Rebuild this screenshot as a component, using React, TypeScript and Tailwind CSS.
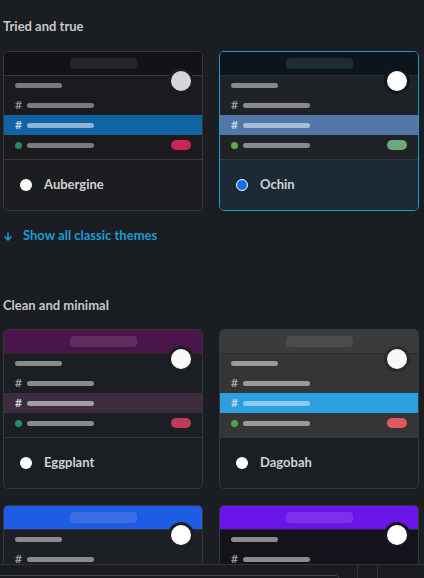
import React from 'react';

type Theme = {
  name: string;
  selected?: boolean;
  border: string;
  header: string;
  pill: string;
  line: string;
  body: string;
  bar: string;
  hash: string;
  active: string;
  activeBar: string;
  dot: string;
  badge: string;
  ring: string;
  knob: string;
  footer: string;
};

const classic: Theme[] = [
  {
    name: 'Aubergine',
    border: 'border-[#36373b]',
    header: 'bg-[#131216]',
    pill: 'bg-[#26252b]',
    line: 'border-[#38373c]',
    body: 'bg-[#1b1a1f]',
    bar: 'bg-[#7a7a7d]',
    hash: 'text-[#8b8b8e]',
    active: 'bg-[#1164a3]',
    activeBar: 'bg-[#8db4d6]',
    dot: 'bg-[#25895f]',
    badge: 'bg-[#cd2553]',
    ring: 'border-[#1c1b20]',
    knob: 'bg-[#d6d6d8]',
    footer: 'bg-[#1b1d21]',
  },
  {
    name: 'Ochin',
    selected: true,
    border: 'border-[#1d9bd1]',
    header: 'bg-[#0c151c]',
    pill: 'bg-[#1f2a32]',
    line: 'border-[#2c3237]',
    body: 'bg-[#1f2227]',
    bar: 'bg-[#8a8a8c]',
    hash: 'text-[#9a9a9c]',
    active: 'bg-[#5077a6]',
    activeBar: 'bg-[#a8bdd6]',
    dot: 'bg-[#5faa46]',
    badge: 'bg-[#6da77d]',
    ring: 'border-[#10171d]',
    knob: 'bg-white',
    footer: 'bg-[#1c2a35]',
  },
];

const minimal: Theme[] = [
  {
    name: 'Eggplant',
    border: 'border-[#36373b]',
    header: 'bg-[#4a154b]',
    pill: 'bg-[#5d2f5e]',
    line: 'border-[#2e2b31]',
    body: 'bg-[#1b1e22]',
    bar: 'bg-[#8a8a8c]',
    hash: 'text-[#9a9a9c]',
    active: 'bg-[#3d2c3d]',
    activeBar: 'bg-[#a39da3]',
    dot: 'bg-[#2a8c62]',
    badge: 'bg-[#c13b59]',
    ring: 'border-[#1b1e22]',
    knob: 'bg-[#fbf9f6]',
    footer: 'bg-[#1b1e22]',
  },
  {
    name: 'Dagobah',
    border: 'border-[#36373b]',
    header: 'bg-[#3b3b3b]',
    pill: 'bg-[#4b4b4b]',
    line: 'border-[#2e2e2e]',
    body: 'bg-[#353535]',
    bar: 'bg-[#9a9a9a]',
    hash: 'text-[#a5a5a5]',
    active: 'bg-[#2c9fdf]',
    activeBar: 'bg-[#8ccaee]',
    dot: 'bg-[#4ba54b]',
    badge: 'bg-[#df5a5f]',
    ring: 'border-[#2b2b2b]',
    knob: 'bg-[#f8f8fa]',
    footer: 'bg-[#1b1e22]',
  },
  {
    name: 'Lagoon',
    border: 'border-[#36373b]',
    header: 'bg-[#1f5ce4]',
    pill: 'bg-[#3a6fe8]',
    line: 'border-[#2e3136]',
    body: 'bg-[#1c1f23]',
    bar: 'bg-[#8a8a8c]',
    hash: 'text-[#9a9a9c]',
    active: 'bg-[#1f5ce4]',
    activeBar: 'bg-[#9ab6f0]',
    dot: 'bg-[#2a8c62]',
    badge: 'bg-[#df5a5f]',
    ring: 'border-[#1b1e22]',
    knob: 'bg-white',
    footer: 'bg-[#1b1e22]',
  },
  {
    name: 'Barbra',
    border: 'border-[#36373b]',
    header: 'bg-[#6a16e8]',
    pill: 'bg-[#7b31ec]',
    line: 'border-[#2b2933]',
    body: 'bg-[#14121a]',
    bar: 'bg-[#8a8a8c]',
    hash: 'text-[#9a9a9c]',
    active: 'bg-[#6a16e8]',
    activeBar: 'bg-[#b89af2]',
    dot: 'bg-[#2a8c62]',
    badge: 'bg-[#df5a5f]',
    ring: 'border-[#16141c]',
    knob: 'bg-white',
    footer: 'bg-[#1b1e22]',
  },
];

const ThemeCard: React.FC<{ t: Theme }> = ({ t }) => (
  <div className={`relative flex flex-col overflow-hidden rounded-[5px] border ${t.border}`}>
    <div className={`flex h-6 items-center justify-center border-b ${t.header} ${t.line}`}>
      <div className={`h-[11px] w-[67px] rounded-[4px] ${t.pill}`} />
    </div>
    <div className={`flex h-[84px] flex-col border-b border-[#36373b] ${t.body}`}>
      <div className="flex h-[19px] items-center pl-[11px]">
        <div className={`h-[5px] w-[47px] rounded-full ${t.bar}`} />
      </div>
      <div className="flex h-5 items-center gap-[5px] pl-[11px]">
        <span className={`w-[7px] text-[12px] font-bold leading-none ${t.hash}`}>#</span>
        <div className={`h-[5px] w-[67px] rounded-full ${t.bar}`} />
      </div>
      <div className={`flex h-5 items-center gap-[5px] pl-[11px] ${t.active}`}>
        <span className="w-[7px] text-[12px] font-bold leading-none text-[#c8d8ea]">#</span>
        <div className={`h-[5px] w-[67px] rounded-full ${t.activeBar}`} />
      </div>
      <div className="flex h-5 items-center pl-[11px] pr-[11px]">
        <div className={`h-[7px] w-[7px] rounded-full ${t.dot}`} />
        <div className={`ml-[5px] h-[5px] w-[67px] rounded-full ${t.bar}`} />
        <div className={`ml-auto h-[10px] w-5 rounded-full ${t.badge}`} />
      </div>
    </div>
    <div className={`flex h-[50px] items-center gap-3 pl-4 ${t.footer}`}>
      {t.selected ? (
        <div className="h-3 w-3 rounded-full border border-white bg-[#1570ef]" />
      ) : (
        <div className="h-3 w-3 rounded-full bg-white" />
      )}
      <span className="text-[13px] font-bold text-[#d1d2d3]">{t.name}</span>
    </div>
    <div className={`absolute right-[8px] top-[16px] h-[26px] w-[26px] rounded-full border-[3px] ${t.ring} ${t.knob}`} />
  </div>
);

export default function App() {
  return (
    <div
      className="relative h-[578px] w-[424px] overflow-hidden bg-[#1a1d21]"
      style={{ fontFamily: 'Lato, "Open Sans", sans-serif' }}
    >
      <div className="w-[419px] pl-[3px] pt-4">
        <h2 className="text-[13px] font-bold leading-5 text-[#c6c7c9]">Tried and true</h2>
        <div className="mt-[15px] grid grid-cols-2 gap-4">
          {classic.map((t) => (
            <ThemeCard key={t.name} t={t} />
          ))}
        </div>
        <button className="mt-[15px] flex h-5 items-center gap-[11px] pl-[1px] text-[13px] font-bold text-[#1d9bd1]">
          <svg width="8" height="9" viewBox="0 0 8 9" fill="none" stroke="currentColor" strokeWidth="1.6" strokeLinecap="round" strokeLinejoin="round">
            <path d="M4 1v7M1 5l3 3 3-3" />
          </svg>
          Show all classic themes
        </button>
        <h2 className="mt-[49px] text-[13px] font-bold leading-5 text-[#c6c7c9]">Clean and minimal</h2>
        <div className="mt-[14px] grid grid-cols-2 gap-4">
          {minimal.map((t) => (
            <ThemeCard key={t.name} t={t} />
          ))}
        </div>
      </div>

      {/* composer strip overlapping the bottom */}
      <div className="absolute left-0 right-0 top-[564px] h-[14px] border-t border-[#303236] bg-[#1a1c20]">
        <div className="absolute left-0 top-[10px] h-[10px] w-[340px] rounded-tr-[5px] border-r border-t border-[#45464a]" />
        <div className="absolute left-[357px] top-0 h-full w-px bg-[#303236]" />
        <div className="absolute left-[377px] top-0 h-full w-px bg-[#303236]" />
      </div>
    </div>
  );
}
